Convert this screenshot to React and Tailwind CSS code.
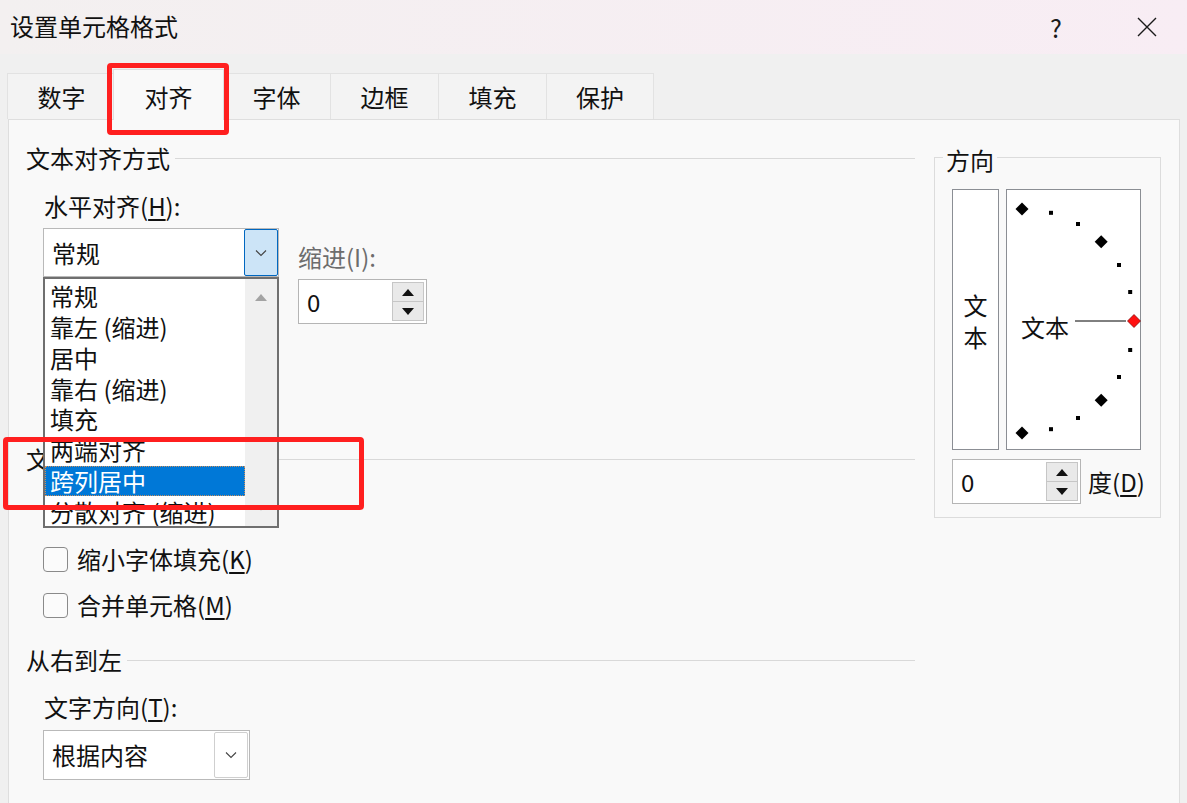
import React from "react";

const F = "font-[family-name:'Noto_Sans_CJK_SC','Noto_Sans',sans-serif]";
const T = "text-[24px] leading-[28px]";

function U({ children }) {
  return <span className="underline underline-offset-[3px] decoration-[1.5px]">{children}</span>;
}

function Chevron() {
  return (
    <svg width="12" height="8" viewBox="0 0 12 8" fill="none">
      <path d="M1 1.5 L6 6.5 L11 1.5" stroke="#444" strokeWidth="1.1" />
    </svg>
  );
}

function Tri({ up }) {
  return (
    <svg width="12" height="7" viewBox="0 0 12 7">
      {up ? <path d="M0 7 L6 0 L12 7 Z" fill="#111" /> : <path d="M0 0 L6 7 L12 0 Z" fill="#111" />}
    </svg>
  );
}

function Spinner({ w }) {
  return (
    <div className={`flex h-[45px] shrink-0 ${w} items-stretch border border-[#b5b5b5] bg-white`}>
      <span className={`flex-1 self-center pl-[8px] ${T}`}>0</span>
      <div className="my-[2px] mr-[2px] flex w-[32px] flex-col">
        <div className="flex flex-1 items-center justify-center border border-[#c6c6c6] bg-[#e9e9e9]">
          <Tri up />
        </div>
        <div className="-mt-px flex flex-1 items-center justify-center border border-[#c6c6c6] bg-[#e9e9e9]">
          <Tri />
        </div>
      </div>
    </div>
  );
}

function Header({ children }) {
  return (
    <div className="flex h-[28px] items-center">
      <span className={T}>{children}</span>
      <div className="ml-[5px] h-px flex-1 bg-[#d9d9d9]" />
    </div>
  );
}

function Check({ children }) {
  return (
    <div className="flex h-[46px] items-center pl-[17px]">
      <div className="h-[25px] w-[25px] rounded-[4px] border-[1.5px] border-[#8a8a8a] bg-[#fbfbfb]" />
      <span className={`ml-[9px] ${T}`}>{children}</span>
    </div>
  );
}

function ArcDots() {
  const cx = 15, cy = 131, r = 112;
  const items = [];
  for (let i = 0; i <= 12; i++) {
    const th = (i * 15 * Math.PI) / 180;
    const x = cx + r * Math.sin(th);
    const y = cy - r * Math.cos(th);
    if (i % 3 === 0) {
      const d = 6.5;
      items.push(
        <path
          key={i}
          d={`M${x} ${y - d} L${x + d} ${y} L${x} ${y + d} L${x - d} ${y} Z`}
          fill={i === 6 ? "#ff1010" : "#000"}
          stroke={i === 6 ? "#700" : "none"}
          strokeWidth="0.7"
        />
      );
    } else {
      items.push(<rect key={i} x={x - 2} y={y - 2} width="4" height="4" fill="#000" />);
    }
  }
  return (
    <svg className="absolute left-0 top-0" width="135" height="261" viewBox="0 0 135 261">
      <line x1="68" y1="131" x2="119" y2="131" stroke="#000" strokeWidth="1" />
      {items}
    </svg>
  );
}

export default function App() {
  const tabs = ["数字", "对齐", "字体", "边框", "填充", "保护"];
  const list = ["常规", "靠左 (缩进)", "居中", "靠右 (缩进)", "填充", "两端对齐", "跨列居中", "分散对齐 (缩进)"];
  return (
    <div className={`relative flex h-[803px] w-[1187px] flex-col overflow-hidden bg-[#f0f0f0] text-[#111] ${F}`}>
      {/* Title bar */}
      <div className="flex h-[54px] shrink-0 items-center bg-linear-to-r from-[#f3f0f0] to-[#f8edf4] pl-[10px]">
        <span className="-mt-[2px] text-[24px] leading-[28px]">设置单元格格式</span>
        <span className="ml-auto w-[14px] text-center text-[25px] leading-[28px] text-[#1a1a1a]">?</span>
        <svg className="ml-[74px] mr-[30px]" width="20" height="20" viewBox="0 0 20 20">
          <path d="M1 1 L19 19 M19 1 L1 19" stroke="#1a1a1a" strokeWidth="1.4" />
        </svg>
      </div>

      {/* Tabs */}
      <div className="flex h-[65px] shrink-0 items-end pl-[7px]">
        {tabs.map((t, i) =>
          i === 1 ? (
            <div
              key={t}
              className={`relative z-10 -mx-[2px] -mb-px flex h-[51px] w-[111px] items-center justify-center border border-b-0 border-[#dedede] bg-[#f9f9f9] pt-[4px] ${T}`}
            >
              {t}
            </div>
          ) : (
            <div
              key={t}
              className={`flex h-[46px] w-[108px] items-center justify-center border-t border-l border-[#e2e2e2] bg-[#f3f3f3] ${i === 5 ? "border-r" : ""} ${T}`}
            >
              {t}
            </div>
          )
        )}
      </div>

      {/* Panel */}
      <div className="ml-[8px] flex w-[1172px] flex-1 border border-b-0 border-[#dedede] bg-[#f9f9f9] pl-[17px] pt-[24px]">
        {/* Left column */}
        <div className="flex w-[889px] flex-col">
          <Header>文本对齐方式</Header>
          <div className={`mt-[20px] pl-[18px] ${T}`}>
            水平对齐(<U>H</U>):
          </div>
          <div className="mt-[8px] flex pl-[17px]">
            <div className="flex h-[49px] w-[236px] items-stretch border border-[#b9b9b9] bg-white">
              <span className={`flex-1 self-center pl-[8px] ${T}`}>常规</span>
              <div className="flex w-[34px] items-center justify-center rounded-[2px] border border-[#0067c0] bg-[#cce4f7]">
                <Chevron />
              </div>
            </div>
            <div className="ml-[19px] mt-[15px] flex flex-col">
              <span className={`text-[#6d6d6d] ${T}`}>缩进(I):</span>
              <div className="mt-[8px]">
                <Spinner w="w-[129px]" />
              </div>
            </div>
          </div>
          <div className="mt-[121px]">
            <Header>文本控制</Header>
          </div>
          <div className="mt-[63px] flex flex-col">
            <Check>
              缩小字体填充(<U>K</U>)
            </Check>
            <Check>
              合并单元格(<U>M</U>)
            </Check>
          </div>
          <div className="mt-[18px]">
            <Header>从右到左</Header>
          </div>
          <div className={`mt-[19px] pl-[18px] ${T}`}>
            文字方向(<U>T</U>):
          </div>
          <div className="mt-[9px] pl-[17px]">
            <div className="flex h-[50px] w-[207px] items-stretch border border-[#b9b9b9] bg-white p-[1px]">
              <span className={`flex-1 self-center pl-[7px] ${T}`}>根据内容</span>
              <div className="flex w-[34px] items-center justify-center rounded-[2px] border border-[#cfcfcf] bg-white">
                <Chevron />
              </div>
            </div>
          </div>
        </div>

        {/* Right group: 方向 */}
        <div className="relative ml-[19px] mt-[13px] flex h-[361px] w-[227px] flex-col border border-[#dcdcdc] px-[17px] pt-[31px]">
          <span className={`absolute -top-[12px] left-[8px] bg-[#f9f9f9] px-[3px] ${T}`}>方向</span>
          <div className="flex h-[261px] gap-[7px]">
            <div className="flex w-[47px] flex-col items-center justify-center border border-[#8b8e94] bg-white pt-[3px]">
              <span className="text-[24px] leading-[32px]">文</span>
              <span className="text-[24px] leading-[32px]">本</span>
            </div>
            <div className="relative w-[135px] border border-[#8b8e94] bg-white">
              <ArcDots />
              <span className={`absolute left-[14px] top-[123px] ${T}`}>文本</span>
            </div>
          </div>
          <div className="mt-[9px] flex items-center">
            <Spinner w="w-[129px]" />
            <span className={`ml-[7px] whitespace-nowrap ${T}`}>
              度(<U>D</U>)
            </span>
          </div>
        </div>
      </div>

      {/* Open dropdown list */}
      <div className="absolute left-[43px] top-[277px] z-20 flex h-[251px] w-[236px] overflow-hidden border-2 border-[#6f6f6f] bg-white">
        <div className="flex w-[200px] flex-col pt-[2px]">
          {list.map((t, i) => (
            <div
              key={t}
              className={`flex h-[30.75px] shrink-0 items-center pl-[5px] whitespace-nowrap text-[24px] leading-[30px] ${
                i === 6 ? "bg-[#0078d7] text-white outline-1 outline-dotted outline-[#c89060] -outline-offset-1" : ""
              }`}
            >
              {t}
            </div>
          ))}
        </div>
        <div className="relative flex-1 bg-[#f0f0f0]">
          <svg className="absolute left-[10px] top-[15px]" width="12" height="7" viewBox="0 0 12 7">
            <path d="M0 7 L6 0 L12 7 Z" fill="#a3a3a3" />
          </svg>
          <svg className="absolute left-[12px] top-[228px]" width="8" height="4" viewBox="0 0 8 4">
            <path d="M0 0 L4 4 L8 0 Z" fill="#d6d6d6" />
          </svg>
        </div>
      </div>

      {/* Red highlight boxes */}
      <div className="pointer-events-none absolute left-[107px] top-[63px] z-30 h-[72px] w-[122px] rounded-[4px] border-[5px] border-[#ff1f1f]" />
      <div className="pointer-events-none absolute left-[3px] top-[437px] z-30 h-[73px] w-[361px] rounded-[4px] border-[5px] border-[#ff1f1f]" />
    </div>
  );
}
